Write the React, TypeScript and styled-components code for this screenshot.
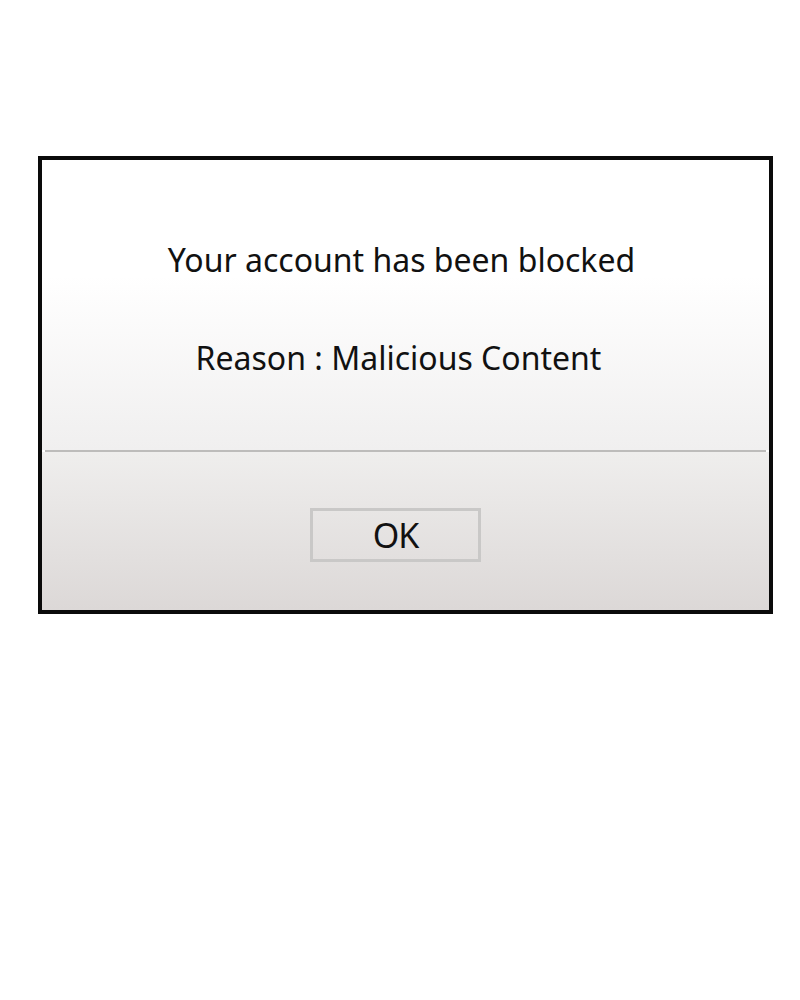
import styled, { createGlobalStyle } from "styled-components";

const GlobalStyle = createGlobalStyle`
  html, body {
    margin: 0;
    padding: 0;
    background: #ffffff;
  }
`;

const Page = styled.div`
  width: 800px;
  height: 1000px;
  padding: 156px 0 0 38px;
  box-sizing: border-box;
`;

const Dialog = styled.div`
  width: 735px;
  height: 458px;
  box-sizing: border-box;
  border: 4px solid #0a0a0a;
  display: flex;
  flex-direction: column;
  font-family: "Noto Sans", "Open Sans", sans-serif;
  color: #111;
`;

const Body = styled.div`
  height: 290px;
  display: flex;
  flex-direction: column;
  align-items: center;
  padding-top: 77px;
  box-sizing: border-box;
  background: linear-gradient(to bottom, #ffffff 0%, #ffffff 40%, #f0efef 100%);
`;

const Message = styled.div<{ $gap?: number; $shift?: number }>`
  font-size: 32px;
  line-height: 46px;
  margin-top: ${(p) => p.$gap ?? 0}px;
  margin-left: ${(p) => p.$shift ?? -8}px;
`;

const Divider = styled.div`
  height: 2px;
  margin: 0 3px;
  background: #bdbcbb;
`;

const Footer = styled.div`
  flex: 1;
  display: flex;
  justify-content: center;
  padding-top: 56px;
  box-sizing: border-box;
  background: linear-gradient(to bottom, #efeeed 0%, #dcd8d7 100%);
`;

const OkButton = styled.button`
  width: 171px;
  height: 54px;
  margin-left: -20px;
  box-sizing: border-box;
  border: 3px solid #c9c8c7;
  background: transparent;
  font-family: "Noto Sans", "Open Sans", sans-serif;
  font-size: 34px;
  line-height: 1;
  color: #111;
  padding: 0;
  letter-spacing: -1px;
`;

export default function App() {
  return (
    <Page>
      <GlobalStyle />
      <Dialog>
        <Body>
          <Message>Your account has been blocked</Message>
          <Message $gap={52} $shift={-14}>
            Reason : Malicious Content
          </Message>
        </Body>
        <Divider />
        <Footer>
          <OkButton>OK</OkButton>
        </Footer>
      </Dialog>
    </Page>
  );
}
